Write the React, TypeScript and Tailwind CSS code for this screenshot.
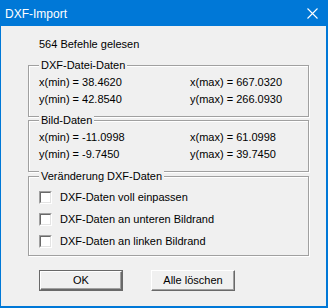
const FONT = "font-['Liberation_Sans',Arial,sans-serif]";

function GroupBox({ label, height, children }: { label: string; height: string; children: React.ReactNode }) {
  return (
    <div
      className={`relative w-[281px] ${height} border border-[#a0a0a0] shadow-[inset_1px_1px_0_#fff,1px_1px_0_#fff] pt-[10px] pl-[10px]`}
    >
      <span className="absolute top-[-7px] left-[10px] px-[2px] bg-[#f0f0f0] leading-[13px]">{label}</span>
      {children}
    </div>
  );
}

function ValueRows({ rows }: { rows: [string, string][] }) {
  return (
    <div className="flex flex-col gap-[4px]">
      {rows.map(([a, b]) => (
        <div key={a} className="flex leading-[13px] h-[13px]">
          <span className="w-[151px]">{a}</span>
          <span>{b}</span>
        </div>
      ))}
    </div>
  );
}

function Checkbox({ label }: { label: string }) {
  return (
    <div className="flex items-center h-[13px]">
      <div className="w-[13px] h-[13px] border border-t-[#a0a0a0] border-l-[#a0a0a0] border-r-white border-b-white">
        <div className="w-full h-full border border-t-[#696969] border-l-[#696969] border-r-[#e3e3e3] border-b-[#e3e3e3] bg-white" />
      </div>
      <span className="ml-[8px] leading-[13px]">{label}</span>
    </div>
  );
}

function Button({ label, isDefault = false }: { label: string; isDefault?: boolean }) {
  return (
    <div className={`w-[84px] h-[21px] ${isDefault ? "border border-[#696969]" : ""}`}>
      <div className="w-full h-full border border-t-white border-l-white border-r-[#696969] border-b-[#696969] shadow-[inset_-1px_-1px_0_#a0a0a0] bg-[#f0f0f0] flex items-center justify-center leading-[13px]">
        {label}
      </div>
    </div>
  );
}

export default function App() {
  return (
    <div className={`w-[328px] h-[308px] bg-[#0078d7] pl-px pr-[2px] pb-[2px] flex flex-col ${FONT} text-[11px] text-black`}>
      <div className="h-[26px] shrink-0 flex items-center justify-between pl-[4px] pr-[8px] text-white text-[12px]">
        <span className="leading-[14px] mt-[1px]">DXF-Import</span>
        <svg width="11" height="11" viewBox="0 0 11 11" className="mt-[1px]">
          <path d="M0.5 0.5 L10.5 10.5 M10.5 0.5 L0.5 10.5" stroke="white" strokeWidth="1.1" />
        </svg>
      </div>
      <div className="flex-1 bg-[#f0f0f0] pl-[27px] flex flex-col">
        <div className="mt-[12px] ml-[11px] leading-[13px]">564 Befehle gelesen</div>
        <div className="mt-[14px]">
          <GroupBox label="DXF-Datei-Daten" height="h-[52px]">
            <ValueRows
              rows={[
                ["x(min) = 38.4620", "x(max) = 667.0320"],
                ["y(min) = 42.8540", "y(max) = 266.0930"],
              ]}
            />
          </GroupBox>
        </div>
        <div className="mt-[3px]">
          <GroupBox label="Bild-Daten" height="h-[52px]">
            <ValueRows
              rows={[
                ["x(min) = -11.0998", "x(max) = 61.0998"],
                ["y(min) = -9.7450", "y(max) = 39.7450"],
              ]}
            />
          </GroupBox>
        </div>
        <div className="mt-[4px]">
          <GroupBox label="Veränderung DXF-Daten" height="h-[80px]">
            <div className="flex flex-col gap-[9px] pt-[4px]">
              <Checkbox label="DXF-Daten voll einpassen" />
              <Checkbox label="DXF-Daten an unteren Bildrand" />
              <Checkbox label="DXF-Daten an linken Bildrand" />
            </div>
          </GroupBox>
        </div>
        <div className="mt-[14px] ml-[11px] flex gap-[28px]">
          <Button label="OK" isDefault />
          <Button label="Alle löschen" />
        </div>
      </div>
    </div>
  );
}
